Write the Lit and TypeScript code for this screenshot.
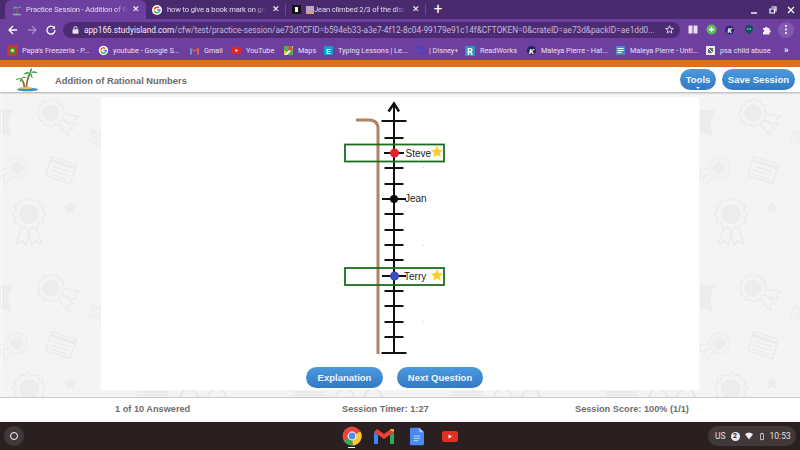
import { LitElement, html, css, svg } from "lit";
import { customElement } from "lit/decorators.js";

const Gicon = svg`<circle cx="7" cy="7" r="6" fill="#fff"/><path d="M7 4.600a2.400 2.400 0 0 1 1.600.6l1.300-1.300A4.400 4.400 0 0 0 3 5.200l1.500 1.200A2.600 2.600 0 0 1 7 4.600z" fill="#ea4335"/><path d="M4.500 7.600 3 8.800a4.400 4.400 0 0 0 6.900 1.300L8.500 9a2.600 2.600 0 0 1-4-1.400z" fill="#34a853"/><path d="M4.400 7c0-.2 0-.4.1-.6L3 5.200a4.400 4.400 0 0 0 0 3.600l1.500-1.200z" fill="#fbbc05"/><path d="M11.400 6H7v1.800h2.500c-.1.5-.5.9-1 1.200l1.400 1.100c.9-.8 1.500-2 1.500-3.500z" fill="#4285f4"/>`;

const BOOKMARKS: [number, unknown, string, string?][] = [
  [7, svg`<rect width="11" height="11" rx="2" fill="#c43a2f"/><circle cx="5.500" cy="5.500" r="3.500" fill="#3a8a3a"/><circle cx="5.500" cy="5.500" r="1.700" fill="#f2d84a"/>`, "Papa's Freezeria - P..."],
  [98, Gicon, "youtube - Google S...", "0 0 14 14"],
  [189, svg`<path d="M1 9.500V2l4.500 3.500L10 2v7.500H8V5L5.500 7 3 5v4.500z" fill="#d9605a"/><path d="M1 9.500V3l2 2v4.500z" fill="#6d8fd8"/>`, "Gmail"],
  [231, svg`<rect x="1" y="2" width="9" height="7" rx="2" fill="#e5261f"/><path d="M4.500 4v3l2.500-1.500z" fill="#fff"/>`, "YouTube"],
  [283, svg`<rect x="1" y="1" width="9" height="9" fill="#4caf50"/><path d="M1 10l9-9v3l-6 6z" fill="#f4f4f4"/><circle cx="7.500" cy="3.500" r="2.200" fill="#e5453a"/><path d="M1 10V5l3 2z" fill="#f4c430"/>`, "Maps"],
  [323, svg`<rect x="1" y="1" width="9" height="9" rx="1" fill="#1c9ad6"/><text x="3" y="8.500" font-size="8" font-weight="700" fill="#fff">E</text>`, "Typing Lessons | Le..."],
  [414, svg`<path d="M1 4C4 1 9 2 10 6c0 2-2 3-4 3" fill="none" stroke="#3049d8" stroke-width="1.200"/><path d="M5 3v6" stroke="#3049d8"/>`, "| Disney+"],
  [465, svg`<rect y="1" width="10" height="10" fill="#2d94b8"/><text x="2" y="9.500" font-size="9" font-weight="700" fill="#fff">R</text>`, "ReadWorks"],
  [526, svg`<circle cx="5.500" cy="5.500" r="4.500" fill="#23235e"/><text x="3" y="8.500" font-size="8" font-weight="700" font-style="italic" fill="#fff">K</text>`, "Maleya Pierre - Hat..."],
  [615, svg`<rect x="1" y="1" width="9" height="9" rx="1" fill="#4a86e8"/><path d="M2.500 3.500h6M2.500 5.500h6M2.500 7.500h4" stroke="#fff"/>`, "Maleya Pierre - Unti..."],
  [705, svg`<rect x="1" y="1" width="9" height="9" fill="#e8e8e8"/><rect x="3" y="3" width="5" height="5" fill="#6a6a7a"/><path d="M3 3l5 5" stroke="#fff"/>`, "psa child abuse"],
];

@customElement("app-root")
export class AppRoot extends LitElement {
  static styles = css`
    :host { display: flex; flex-direction: column; width: 800px; height: 450px; overflow: hidden; font-family: "Roboto", "Liberation Sans", sans-serif; background: #f3f3f3; }
    svg { display: block; flex: none; }

    .tabs { height: 19px; background: #492a6e; display: flex; align-items: flex-end; color: #e2d9ec; font-size: 7.600px; letter-spacing: -0.150px; padding-left: 5px; flex: none; }
    .tab { height: 19px; display: flex; align-items: center; box-sizing: border-box; flex: none; white-space: nowrap; overflow: hidden; }
    .tab.active { width: 141px; background: #6d3f9e; border-radius: 6px 6px 0 0; padding: 0 5px 0 6px; gap: 3px; }
    .tab.b { width: 139px; padding: 0 4px 0 6px; gap: 5px; }
    .tab.c { width: 140px; padding: 0 4px 0 6px; border-left: 1px solid #6a5088; height: 11px; margin-bottom: 4px; gap: 5px; }
    .tab .t { flex: 1; overflow: hidden; -webkit-mask-image: linear-gradient(90deg, #000 88%, transparent); mask-image: linear-gradient(90deg, #000 88%, transparent); }
    .tab .t.tight { margin-left: -5px; }
    .close { font-size: 9px; line-height: 1; color: #fff; width: 10px; text-align: center; flex: none; }
    .plus { border-left: 1px solid #6a5088; font-size: 15px; color: #fff; line-height: 11px; height: 11px; margin-bottom: 4px; width: 24px; text-align: center; }
    .win { margin-left: auto; display: flex; gap: 10.500px; padding-right: 5px; align-items: center; height: 19px; }

    .toolbar { height: 21px; background: #6d3f9e; display: flex; align-items: center; flex: none; padding-left: 8px; }
    .nav { display: flex; gap: 9px; align-items: center; margin-right: 7px; }
    .omni { width: 617px; height: 16px; border-radius: 8px; background: #4d2b73; display: flex; align-items: center; font-size: 8.250px; padding-left: 9px; box-sizing: border-box; color: #c8b8dc; white-space: nowrap; overflow: hidden; gap: 5px; flex: none; }
    .omni b { font-weight: 400; color: #f3eef8; }
    .omni .u { flex: 1; overflow: hidden; }
    .omni .st { margin-right: 6px; }
    .ext { display: flex; align-items: center; gap: 8px; margin-left: 8px; }
    .ext .m2 { margin-left: 2px; }
    .more { width: 16px; height: 16px; border-radius: 50%; background: #8359b0; display: flex; align-items: center; justify-content: center; margin-left: -2px; }

    .bookmarks { height: 20px; background: #6d3f9e; display: flex; align-items: center; font-size: 7.300px; color: #e8e0f0; flex: none; white-space: nowrap; padding-left: 7px; box-sizing: border-box; }
    .bm { display: flex; align-items: center; gap: 4px; height: 14px; flex: none; overflow: hidden; }
    .chev { color: #fff; font-weight: 700; font-size: 9px; }

    .orange { height: 7px; background: #e0701f; flex: none; }
    .head { height: 25px; background: #fff; display: flex; align-items: center; flex: none; padding: 0 5px 0 15px; box-shadow: 0 1px 2px rgba(0,0,0,.3); position: relative; z-index: 2; }
    .title { font-size: 9.350px; font-weight: 700; color: #6b6b6b; margin-left: 16px; padding-top: 2px; font-family: "Liberation Sans", sans-serif; }
    .btns { margin-left: auto; display: flex; gap: 6px; }
    .pill { background: linear-gradient(#4a9ade, #3279c4); color: #f0f6fc; border: none; border-radius: 11px; height: 21px; font: 700 9.500px "Liberation Sans", sans-serif; padding: 0; display: flex; align-items: center; justify-content: center; position: relative; }
    .tools { width: 36px; }
    .save { width: 73px; }
    .caret { position: absolute; bottom: 1px; left: 50%; margin-left: -2px; width: 0; height: 0; border: 2px solid transparent; border-top: 2px solid #fff; border-bottom: 0; }

    .body { flex: 1; position: relative; overflow: hidden; background: #f4f4f4; padding: 5px 101px 7px; display: flex; }
    .wall { position: absolute; left: 0; top: 0; }
    .sheet { position: relative; width: 598px; background: #fff; display: flex; flex-direction: column; align-items: center; }
    .actions { display: flex; gap: 14px; margin: 4px 11px 0 0; }
    .ex { width: 77px; }
    .nq { width: 86px; }

    .foot { height: 25px; background: #fff; flex: none; display: grid; grid-template-columns: 227px 233px auto; padding: 0 0 2px 115px; align-items: center; font: 700 9.200px "Liberation Sans", sans-serif; color: #6e6e6e; border-top: 1px solid #c9c9c9; box-sizing: border-box; }

    .shelf { height: 28px; background: #2a2021; flex: none; display: flex; align-items: center; position: relative; }
    .launcher { width: 20px; height: 20px; border-radius: 50%; background: #423839; margin-left: 4px; display: flex; align-items: center; justify-content: center; }
    .launcher i { width: 6px; height: 6px; border: 1.200px solid #fff; border-radius: 50%; display: block; }
    .apps { margin-left: 318px; display: flex; align-items: center; position: relative; }
    .apps .gmail { margin-left: 12px; }
    .apps .docs { margin-left: 16px; }
    .apps .yt { margin-left: 18px; }
    .running { position: absolute; left: 6px; bottom: -2px; width: 7px; height: 1px; background: #fff; }
    .tray { margin-left: auto; margin-right: 4px; height: 20px; width: 88px; background: #423839; border-radius: 10px; display: flex; align-items: center; color: #e4e0e0; font-size: 8.500px; padding-left: 7px; box-sizing: border-box; }
    .badge { width: 9px; height: 9px; border-radius: 50%; background: #eee; color: #2a2021; font-size: 7px; font-weight: 700; display: flex; align-items: center; justify-content: center; margin: 0 5px; }
    .wifi { margin-right: 7px; }
    .batt { margin-right: 6px; }
  `;

  private tick(y: number, half: number) {
    return svg`<line x1=${394 - half} x2=${394 + half} y1=${y} y2=${y} stroke="#111" stroke-width="2"/>`;
  }

  private starPts(cx: number, cy: number, outer: number, inner: number) {
    const pts: string[] = [];
    for (let i = 0; i < 10; i++) {
      const r = i % 2 ? inner : outer;
      const a = -Math.PI / 2 + (i * Math.PI) / 5;
      pts.push(`${(cx + r * Math.cos(a)).toFixed(1)},${(cy + r * Math.sin(a)).toFixed(1)}`);
    }
    return pts.join(" ");
  }

  private medal(x: number, y: number, s: number, rot: number) {
    const pts: string[] = [];
    for (let i = 0; i < 72; i++) {
      const a = (i / 72) * Math.PI * 2;
      const r = 15 + 1.300 * Math.cos(a * 12);
      pts.push(`${(r * Math.cos(a)).toFixed(1)},${(r * Math.sin(a)).toFixed(1)}`);
    }
    return svg`<g transform="translate(${x} ${y}) rotate(${rot}) scale(${s})" fill="none" stroke="#ebebeb" stroke-width="1.600">
      <polygon points=${pts.join(" ")}/>
      <circle r="10" fill="#ececec" stroke="none"/>
      <path d="M-7 14-13 30-6 27-3 32 1 16M7 14 13 30 6 27 3 32-1 16" fill="#f4f4f4"/>
    </g>`;
  }

  private doc(x: number, y: number, s = 1) {
    return svg`<g transform="translate(${x} ${y}) rotate(18) scale(${s})" fill="none" stroke="#ebebeb" stroke-width="1.500">
      <rect x="-13" y="-10" width="26" height="20"/><path d="M-13-6h26" stroke-width="3"/>
      <path d="M-9-1H9M-9 3H9M-9 7H9"/>
    </g>`;
  }

  private tile(dx: number, dy: number) {
    return svg`<g transform="translate(${dx} ${dy})">
      ${this.medal(51, 21, 0.860, -60)}
      <path d="M-2 18H13L8 30 11 45 -2 40z" fill="#ececec"/>
      ${this.medal(17, 76, 0.660, 60)}
      ${this.doc(61, 78)}
      ${this.doc(98, 46, 0.600)}
      ${this.medal(29, 122, 1, 0)}
      <polygon points=${this.starPts(70, 116, 7, 3.500)} fill="#ececec"/>
    </g>`;
  }

  render() {
    const ticks = [138, 168, 184, 214, 230, 245, 260, 291, 306, 322, 337];
    return html`
      <div class="tabs">
        <div class="tab active">
          <svg width="12" height="12" viewBox="0 0 12 12"><path d="M5.500 10.500 6.500 4" stroke="#8a6a4a" stroke-width="1.300"/><path d="M1.500 5c2-3 4-3 5-1 1-2 3-2 4.500 0-2-.5-3-.5-4.500 0z" fill="#5aa98a"/><ellipse cx="6" cy="10.500" rx="4.500" ry="1" fill="#7aa6c0"/></svg>
          <span class="t">Practice Session - Addition of Ra</span><span class="close">✕</span>
        </div>
        <div class="tab b">
          <svg width="10" height="10" viewBox="1 1 12 12">${Gicon}</svg>
          <span class="t">how to give a book mark on goo</span><span class="close">✕</span>
        </div>
        <div class="tab c">
          <svg width="9" height="9" viewBox="0 0 9 9"><rect width="9" height="9" rx="1" fill="#111"/><rect x="3" y="2" width="3" height="5" fill="#fff"/></svg>
          <svg width="8" height="8" viewBox="0 0 8 8"><rect width="8" height="8" fill="#b9a8c8"/><path d="M0 7l3-3 2 2 3-3v5H0z" fill="#d89a80"/></svg>
          <span class="t tight">Jean climbed 2/3 of the dista</span><span class="close">✕</span>
        </div>
        <div class="plus">+</div>
        <div class="win">
          <svg width="8" height="8" viewBox="0 0 8 8"><path d="M1 7h6" stroke="#fff" stroke-width="1.400"/></svg>
          <svg width="8" height="8" viewBox="0 0 8 8"><path d="M2.500 1h4.500v4.500M1 3h4.500v4H1z" fill="none" stroke="#fff" stroke-width="1.200"/></svg>
          <svg width="8" height="8" viewBox="0 0 8 8"><path d="M1 1l6 6M7 1 1 7" stroke="#fff" stroke-width="1.300"/></svg>
        </div>
      </div>

      <div class="toolbar">
        <div class="nav">
          <svg width="10" height="10" viewBox="0 0 10 10"><path d="M9 5H1.500M5 1 1 5l4 4" fill="none" stroke="#fff" stroke-width="1.300"/></svg>
          <svg width="10" height="10" viewBox="0 0 10 10"><path d="M1 5h7.500M5 1l4 4-4 4" fill="none" stroke="#a688c6" stroke-width="1.300"/></svg>
          <svg width="10" height="10" viewBox="0 0 10 10"><path d="M8.500 3.200A4 4 0 1 0 9 5" fill="none" stroke="#fff" stroke-width="1.300"/><path d="M9 .8v3H6z" fill="#fff"/></svg>
        </div>
        <div class="omni">
          <svg width="7" height="8" viewBox="0 0 7 8"><rect x=".5" y="3.200" width="6" height="4.500" rx=".8" fill="#e8e0f0"/><path d="M2 3.500V2a1.500 1.500 0 0 1 3 0v1.500" fill="none" stroke="#e8e0f0"/></svg>
          <span class="u"><b>app166.studyisland.com</b>/cfw/test/practice-session/ae73d?CFID=b594eb33-a3e7-4f12-8c04-99179e91c14f&amp;CFTOKEN=0&amp;crateID=ae73d&amp;packID=ae1dd0...</span>
          <svg class="st" width="9" height="9" viewBox="0 0 10 10"><polygon points=${this.starPts(5, 5.300, 4.500, 2)} fill="none" stroke="#e8e0f0"/></svg>
        </div>
        <div class="ext">
          <svg width="10" height="9" viewBox="0 0 10 9"><rect x=".5" y=".5" width="4" height="8" fill="#e8e0f0"/><rect x="5.500" y=".5" width="4" height="8" fill="#e8e0f0"/></svg>
          <svg width="11" height="11" viewBox="0 0 11 11"><circle cx="5.500" cy="5.500" r="5" fill="#5fbf5a"/><path d="M3 5.500h5M5.500 3v5" stroke="#fff" stroke-width="1.300"/></svg>
          <svg width="9" height="10" viewBox="0 0 9 10"><circle cx="4.500" cy="5" r="4.500" fill="#2c2a6a"/><text x="2.400" y="7.500" font-size="7" font-weight="700" font-style="italic" fill="#fff">K</text></svg>
          <svg class="m2" width="10" height="10" viewBox="0 0 10 10"><path d="M5 9.500C3 8 1 6 1 4a4 4 0 0 1 8 0c0 2-2 4-4 5.500z" fill="#17505a"/><circle cx="3.800" cy="4" r=".8" fill="#8fe"/><circle cx="6.200" cy="4" r=".8" fill="#8fe"/></svg>
          <svg width="10" height="10" viewBox="0 0 10 10"><path d="M1 3h2a1.200 1.200 0 0 1 2.400 0h2.100v2a1.200 1.200 0 0 1 0 2.400V9.500H1V7a1.200 1.200 0 0 0 0-2.400z" fill="#f0eaf6"/></svg>
          <div class="more"><svg width="2" height="9" viewBox="0 0 2 9"><circle cx="1" cy="1" r="1" fill="#fff"/><circle cx="1" cy="4.500" r="1" fill="#fff"/><circle cx="1" cy="8" r="1" fill="#fff"/></svg></div>
        </div>
      </div>

      <div class="bookmarks">
        ${BOOKMARKS.map(([left, icon, label, vb], i) => {
          const next = i + 1 < BOOKMARKS.length ? BOOKMARKS[i + 1][0] : 784;
          return html`<span class="bm" style="width:${next - left}px"><svg width="11" height="11" viewBox=${vb ?? "0 0 11 11"}>${icon}</svg>${label}</span>`;
        })}
        <span class="chev">»</span>
      </div>

      <div class="orange"></div>

      <div class="head">
        <svg width="24" height="24" viewBox="0 0 24 24">
          <path d="M11.500 20C11.500 14 13 9 15.500 5M9.500 20C9.500 16 8 13 6 10.500" fill="none" stroke="#9a6a30" stroke-width="1.700"/>
          <path d="M15.500 5c-3-2-6-.5-7 1.500 2-.5 4.500-.8 7-1.500zM15.500 5c3-3 6-2 7.500 .5-2.500-1-5-.9-7.500-.5zM15.500 5c-1.500-2-.5-4 1.500-5 .3 1.800-.2 3.500-1.500 5zM15.500 5c1.500 1 2.500 3.500 1.800 5.500-1.300-1.500-2-3.500-1.800-5.500zM15.500 5c-1.500 .5-3 2.500-3.200 4.500 1.500-1 2.800-2.800 3.200-4.500z" fill="#2fa14a"/>
          <path d="M6 10.500c-2-1-4.500-.3-5.500 1.800 2-.6 3.800-1 5.500-1.800zM6 10.500c1-2 4-2.300 5.500-.3-2-.3-3.700-.2-5.500 .3zM6 10.500c-1.300 1-1.500 3-1 4.500 .9-1.100 1.300-2.800 1-4.500zM6 10.500c1 .6 2 2 2.200 3.500-1.200-.6-2-2-2.200-3.500z" fill="#45b455"/>
          <ellipse cx="12.500" cy="21.500" rx="10.500" ry="1.800" fill="#2f93c9"/>
          <ellipse cx="11" cy="20" rx="6.500" ry="1.100" fill="#e3c15f"/>
        </svg>
        <span class="title">Addition of Rational Numbers</span>
        <div class="btns">
          <button class="pill tools">Tools<span class="caret"></span></button>
          <button class="pill save">Save Session</button>
        </div>
      </div>

      <div class="body">
        <svg class="wall" width="800" height="305" viewBox="0 0 800 305">
          ${this.tile(0, 0)}${this.tile(0, 175)}
          ${this.tile(702, 0)}${this.tile(702, 175)}
          <rect x="1" width="1" height="305" fill="#fbfbfb"/>
          ${[177, 333, 491, 646].map((x) => svg`
            <path d="M${x - 40} 300h32M${x - 40} 303h32" stroke="#e6e6e6" stroke-width="1.500"/>
            <circle cx=${x + 12} cy="306" r="9" fill="none" stroke="#e6e6e6" stroke-width="1.500"/>
            <circle cx=${x + 40} cy="306" r="9" fill="none" stroke="#e6e6e6" stroke-width="1.500"/>`)}
        </svg>
        <div class="sheet">
          <svg width="598" height="266" viewBox="101 97 598 266">
            <path d="M356 120h13q9 0 9 9V354" fill="none" stroke="#b08368" stroke-width="3"/>
            <line x1="394" x2="394" y1="104" y2="353" stroke="#111" stroke-width="2"/>
            <path d="M388.500 111.500 394 103.500 399 111.500" fill="none" stroke="#111" stroke-width="2.400"/>
            ${ticks.map((y) => this.tick(y, 9.500))}
            ${this.tick(121, 12.500)}${this.tick(153, 10)}${this.tick(199, 12)}${this.tick(276, 12)}${this.tick(353, 12.500)}
            <rect x="345" y="144.500" width="99" height="17" fill="none" stroke="#1c6e1c" stroke-width="1.800"/>
            <rect x="345" y="268" width="99" height="17" fill="none" stroke="#1c6e1c" stroke-width="1.800"/>
            <circle cx="394.500" cy="153" r="4.500" fill="#e3202f"/>
            <circle cx="394" cy="199" r="4" fill="#0b0b0b"/>
            <circle cx="394.500" cy="276" r="4.500" fill="#3b4cc0"/>
            <g font-family="Liberation Sans, sans-serif" font-size="10" fill="#222">
              <text x="405.500" y="156.500">Steve</text>
              <text x="405" y="202">Jean</text>
              <text x="404" y="280">Terry</text>
            </g>
            <polygon points=${this.starPts(437, 152, 6.500, 3)} fill="#fbd02e"/>
            <polygon points=${this.starPts(437, 275.500, 6.500, 3)} fill="#fbd02e"/>
            ${[167, 245, 321].map((y) => svg`<rect x="423" y=${y} width="1" height="1" fill="#c8cfe0"/>`)}
          </svg>
          <div class="actions">
            <button class="pill ex">Explanation</button>
            <button class="pill nq">Next Question</button>
          </div>
        </div>
      </div>

      <div class="foot">
        <span>1 of 10 Answered</span>
        <span>Session Timer: 1:27</span>
        <span>Session Score: 100% (1/1)</span>
      </div>

      <div class="shelf">
        <div class="launcher"><i></i></div>
        <div class="apps">
          <svg width="20" height="20" viewBox="0 0 20 20">
            <circle cx="10" cy="10" r="9.500" fill="#e8453c"/>
            <path d="M10 10 1.800 14.800A9.500 9.500 0 0 0 11 19.500z" fill="#3aa757"/>
            <path d="M10 10 11 19.500A9.500 9.500 0 0 0 18.500 5.500z" fill="#fcc934"/>
            <circle cx="10" cy="10" r="4.400" fill="#fff"/><circle cx="10" cy="10" r="3.400" fill="#4a8cf0"/>
          </svg>
          <span class="running"></span>
          <svg class="gmail" width="20" height="15" viewBox="0 0 20 15">
            <path d="M0 3v12h4V6z" fill="#4285f4"/><path d="M16 6v9h4V3z" fill="#34a853"/>
            <path d="M0 3 10 10 20 3 17 0 10 5 3 0z" fill="#ea4335"/><path d="M16 1l4 2v-1a2 2 0 0 0-3-2z" fill="#fbbc05"/>
          </svg>
          <svg class="docs" width="14" height="19" viewBox="0 0 15 19">
            <path d="M0 1.500A1.500 1.500 0 0 1 1.500 0H10l5 5v12.500a1.500 1.500 0 0 1-1.500 1.500h-12A1.500 1.500 0 0 1 0 17.500z" fill="#4a8af0"/>
            <path d="M10 0l5 5h-5z" fill="#a7c4f7"/><path d="M4 9h7M4 11.500h7M4 14h5" stroke="#c8dbfa"/>
          </svg>
          <svg class="yt" width="16" height="11" viewBox="0 0 16 11"><rect width="16" height="11" rx="2.500" fill="#e0301e"/><path d="M6.500 3.500v4l3.500-2z" fill="#fff"/></svg>
        </div>
        <div class="tray">
          <span>US</span><span class="badge">2</span>
          <svg class="wifi" width="8" height="8" viewBox="0 0 9 8"><path d="M0 2a7 7 0 0 1 9 0L4.500 8z" fill="#eee"/></svg>
          <svg class="batt" width="4" height="9" viewBox="0 0 5 9"><rect x=".5" y="1" width="4" height="7.500" rx=".7" fill="none" stroke="#eee"/><rect x="1.500" width="2" height="1" fill="#eee"/></svg>
          <span>10:53</span>
        </div>
      </div>
    `;
  }
}
